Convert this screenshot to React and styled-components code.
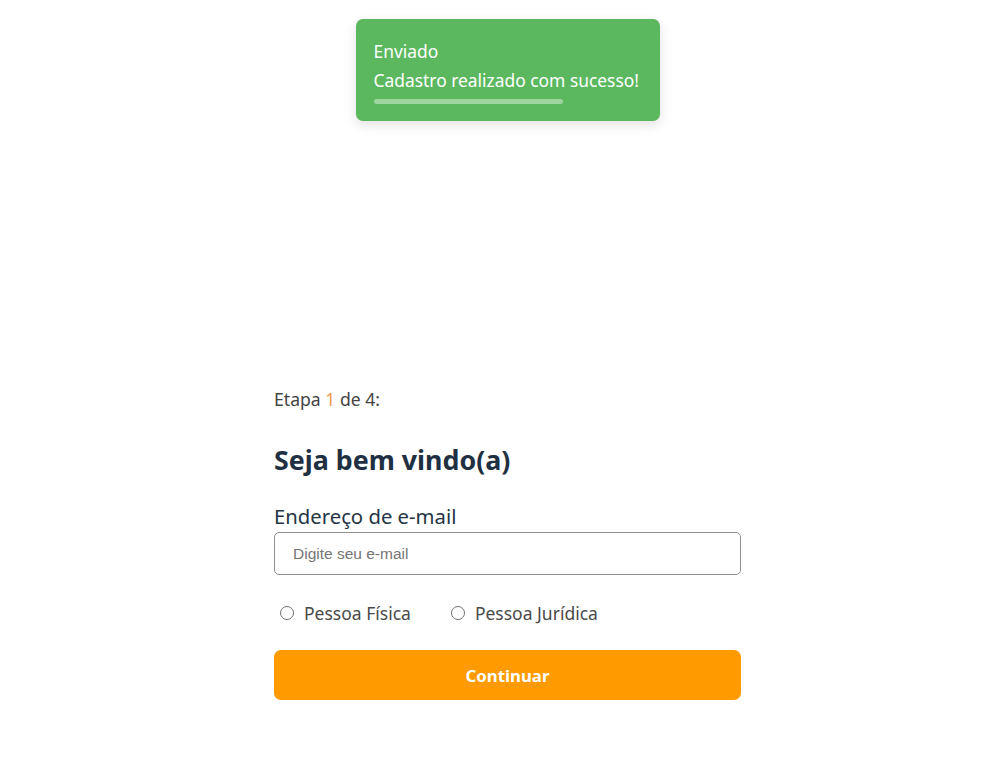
import React from "react";
import styled, { createGlobalStyle } from "styled-components";

const Global = createGlobalStyle`
  html, body { margin: 0; padding: 0; background: #fff; }
  body { font-family: "Noto Sans", "Open Sans", sans-serif; }
  * { box-sizing: border-box; }
`;

const Page = styled.div`
  min-height: 782px;
  padding-left: 10px;
  display: flex;
  flex-direction: column;
  align-items: center;
`;

const ToastArea = styled.div`
  padding-top: 19px;
  height: 387px;
`;

const Toast = styled.div`
  width: 304px;
  background: #5cb85f;
  border-radius: 7px;
  box-shadow: 0 4px 12px rgba(0, 0, 0, 0.12);
  color: #fff;
  padding: 18px 18px 17px 18px;
  font-size: 17.4px;
  line-height: 29px;
`;

const ToastLine = styled.div`
  white-space: nowrap;
`;

const Progress = styled.div`
  margin-top: 4px;
  width: 189px;
  height: 5px;
  border-radius: 3px;
  background: rgba(255, 255, 255, 0.4);
`;

const Form = styled.div`
  width: 467px;
  display: flex;
  flex-direction: column;
`;

const Step = styled.div`
  font-size: 17.6px;
  color: #444;
  line-height: 24px;
`;

const Accent = styled.span`
  color: #f49a4e;
`;

const Title = styled.h1`
  margin: 32px 0 0;
  font-size: 26.8px;
  font-weight: 700;
  color: #1f3042;
  line-height: 34px;
`;

const Label = styled.label`
  margin-top: 25px;
  font-size: 20.3px;
  color: #253545;
  line-height: 28px;
`;

const Input = styled.input`
  margin-top: 2px;
  height: 43px;
  border: 1px solid #8f8f8f;
  border-radius: 5px;
  padding: 0 18px;
  font-family: "Liberation Sans", Arial, sans-serif;
  font-size: 15.5px;
  color: #333;
  &::placeholder { color: #757575; }
`;

const RadioRow = styled.div`
  margin-top: 26px;
  display: flex;
  gap: 40px;
  padding-left: 6px;
`;

const RadioLabel = styled.label`
  display: flex;
  align-items: center;
  gap: 10px;
  font-size: 17.5px;
  color: #4a4a4a;
  line-height: 24px;
`;

const RadioCircle = styled.span`
  width: 14px;
  height: 14px;
  border-radius: 50%;
  border: 1px solid #707070;
  display: inline-block;
`;

const Button = styled.button`
  margin-top: 25px;
  height: 50px;
  border: none;
  border-radius: 7px;
  background: #ff9a00;
  color: #fff;
  font-family: "Noto Sans", sans-serif;
  font-size: 16.8px;
  font-weight: 700;
`;

export default function App() {
  return (
    <>
      <Global />
      <Page>
        <ToastArea>
          <Toast>
            <ToastLine>Enviado</ToastLine>
            <ToastLine>Cadastro realizado com sucesso!</ToastLine>
            <Progress />
          </Toast>
        </ToastArea>
        <Form>
          <Step>
            Etapa <Accent>1</Accent> de 4:
          </Step>
          <Title>Seja bem vindo(a)</Title>
          <Label>Endereço de e-mail</Label>
          <Input placeholder="Digite seu e-mail" />
          <RadioRow>
            <RadioLabel>
              <RadioCircle />
              Pessoa Física
            </RadioLabel>
            <RadioLabel>
              <RadioCircle />
              Pessoa Jurídica
            </RadioLabel>
          </RadioRow>
          <Button>Continuar</Button>
        </Form>
      </Page>
    </>
  );
}
